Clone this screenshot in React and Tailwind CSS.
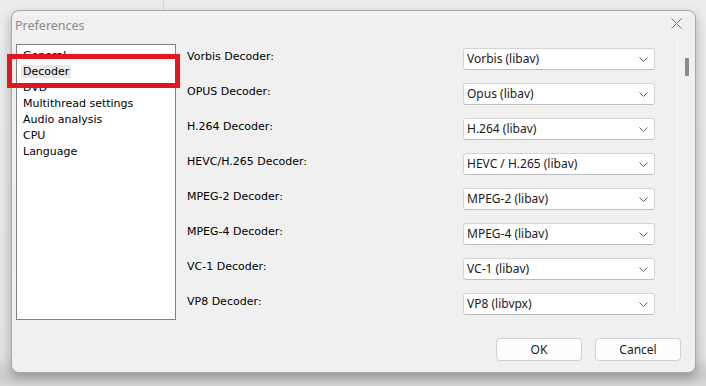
import React from 'react';

const SECTIONS = ['General', 'Decoder', 'DVD', 'Multithread settings', 'Audio analysis', 'CPU', 'Language'];

// Label on the left, currently chosen decoder in the dropdown on the right.
const DECODERS = [
  { label: 'Vorbis Decoder:', value: 'Vorbis (libav)' },
  { label: 'OPUS Decoder:', value: 'Opus (libav)' },
  { label: 'H.264 Decoder:', value: 'H.264 (libav)' },
  { label: 'HEVC/H.265 Decoder:', value: 'HEVC / H.265 (libav)' },
  { label: 'MPEG-2 Decoder:', value: 'MPEG-2 (libav)' },
  { label: 'MPEG-4 Decoder:', value: 'MPEG-4 (libav)' },
  { label: 'VC-1 Decoder:', value: 'VC-1 (libav)' },
  { label: 'VP8 Decoder:', value: 'VP8 (libvpx)' },
];

const UI_FONT = "font-['Noto_Sans',_'Open_Sans',_sans-serif]";
const TAHOMA = "font-['DejaVu_Sans',_sans-serif]";

const Chevron = () => (
  <svg width="9" height="5" viewBox="0 0 9 5" className="shrink-0">
    <polyline points="0.5,0.5 4.5,4.5 8.5,0.5" fill="none" stroke="#606060" strokeWidth="1" />
  </svg>
);

const DecoderSelect = ({ value }) => (
  <div className={`w-[192px] h-[22px] flex items-center justify-between bg-white border border-[#d4d4d4] border-b-[#bdbdbd] rounded-[3px] pl-[3px] pr-[6px] text-[12px] text-[#1a1a1a] ${UI_FONT}`}>
    <span>{value}</span>
    <Chevron />
  </div>
);

const Button = ({ children }) => (
  <div className={`w-[86px] h-[23px] flex items-center justify-center bg-[#fdfdfd] border border-[#d0d0d0] rounded-[4px] text-[12px] text-[#1a1a1a] ${UI_FONT}`}>
    {children}
  </div>
);

export default function App() {
  return (
    <div className="relative w-[706px] h-[386px] overflow-hidden bg-[linear-gradient(to_bottom,#ececec_0%,#e4e4e4_92%,#cbcbcb_97%,#d6d6d6_100%)] pt-[10px] pl-[11px]">
      {/* window behind the dialog */}
      <div className="absolute left-[163px] top-0 w-px h-[11px] bg-[#d6d6d6]" />

      <div className="relative w-[685px] h-[363px] flex flex-col bg-[#f0f0f0] border border-[#a8a8a8] rounded-[8px] shadow-[0_5px_12px_rgba(0,0,0,0.28)]">
        {/* Title bar */}
        <div className="h-[29px] flex items-center justify-between pl-[3px] pr-[13px]">
          <span className={`mt-[2px] text-[12.5px] text-[#8a8a8a] ${UI_FONT}`}>Preferences</span>
          <svg width="11" height="11" viewBox="0 0 11 11" className="mb-[5px]">
            <path d="M0.5 0.5L10.5 10.5M10.5 0.5L0.5 10.5" stroke="#747474" strokeWidth="1" />
          </svg>
        </div>

        {/* Body */}
        <div className="flex h-[280px]">
          {/* Section list */}
          <div className={`mt-[4px] ml-[4px] w-[160px] h-[276px] bg-white border border-[#828282] pl-[4px] pt-[3px] text-[11px] leading-[16px] text-black ${TAHOMA}`}>
            {SECTIONS.map((s) => (
              <div key={s}>
                <span className={`px-[2px] ${s === 'Decoder' ? 'bg-[#e9e9e9]' : ''}`}>{s}</span>
              </div>
            ))}
          </div>

          {/* Decoder settings */}
          <div className="flex-1 flex flex-col gap-[13px] pt-[8px] pl-[11px] pr-[22px]">
            {DECODERS.map((d) => (
              <div key={d.label} className="flex items-center justify-between">
                <span className={`mb-[4px] text-[11px] text-black ${TAHOMA}`}>{d.label}</span>
                <DecoderSelect value={d.value} />
              </div>
            ))}
          </div>

          {/* Scrollbar */}
          <div className="w-[18px] h-[275px] border-l border-[#fafafa] pl-[7px] pt-[18px]">
            <div className="w-[4px] h-[18px] bg-[#8a8a8a] rounded-[1px]" />
          </div>
        </div>

        {/* Buttons */}
        <div className="flex justify-end gap-[13px] pr-[14px] mt-[18px]">
          <Button>OK</Button>
          <Button>Cancel</Button>
        </div>
      </div>

      {/* Annotation highlight */}
      <div className="absolute left-[7px] top-[54px] w-[173px] h-[34px] border-[5px] border-[#e2161f]" />
    </div>
  );
}
